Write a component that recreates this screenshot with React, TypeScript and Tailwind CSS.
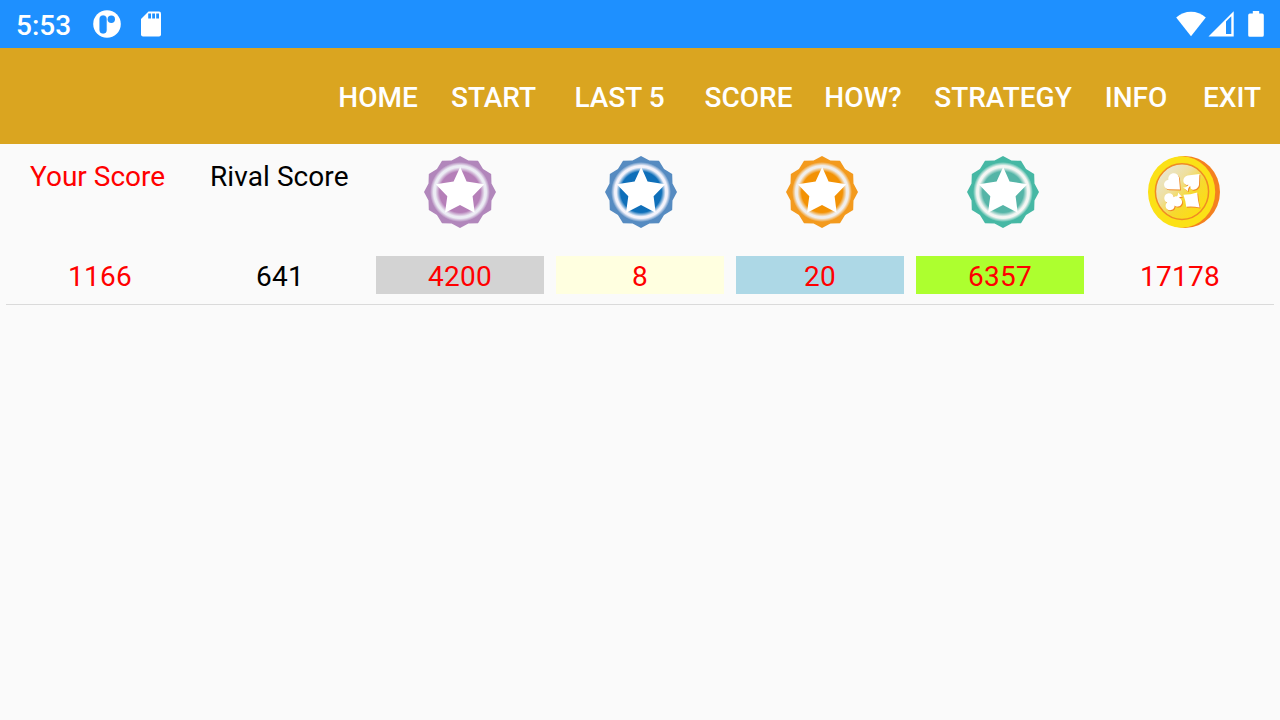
import { useId } from "react";

const MENU = [
  { label: "Home", width: "w-[118px]" },
  { label: "Start", width: "w-[113px]" },
  { label: "Last 5", width: "w-[139px]" },
  { label: "Score", width: "w-[119px]" },
  { label: "How?", width: "w-[110px]" },
  { label: "Strategy", width: "w-[170px]" },
  { label: "Info", width: "w-24" },
  { label: "Exit", width: "w-24" },
];

const BADGES = [
  { edge: "#b186bb", core: "#b57fb8", ring: "#ececf4" },
  { edge: "#568bc1", core: "#0f6fb9", ring: "#f4f3fb" },
  { edge: "#f39a1d", core: "#f39204", ring: "#f0eeec" },
  { edge: "#46b8a4", core: "#55b5a7", ring: "#f4f6f3" },
];

const VALUES = [
  { value: "1166", style: "text-[#ff0000]" },
  { value: "641", style: "text-black" },
  { value: "4200", style: "text-[#ff0000] bg-[#d3d3d3]" },
  { value: "8", style: "text-[#ff0000] bg-[#ffffe0]" },
  { value: "20", style: "text-[#ff0000] bg-[#add8e6]" },
  { value: "6357", style: "text-[#ff0000] bg-[#adff2f]" },
  { value: "17178", style: "text-[#ff0000]" },
];

// 24 vertices, alternating between the tips and the notches
const SEAL = Array.from({ length: 24 }, (_, i) => {
  const r = i % 2 ? 32.6 : 36;
  const a = (i * Math.PI) / 12;
  return `${(36 + r * Math.sin(a)).toFixed(2)},${(36 - r * Math.cos(a)).toFixed(2)}`;
}).join(" ");

function Badge({ edge, core, ring }: { edge: string; core: string; ring: string }) {
  const id = useId();
  return (
    <svg viewBox="0 0 72 72" className="size-[72px]">
      <defs>
        <radialGradient id={id} gradientUnits="userSpaceOnUse" cx="36" cy="36" r="30">
          <stop offset="0.68" stopColor={core} />
          <stop offset="0.82" stopColor={ring} />
          <stop offset="0.88" stopColor={ring} />
          <stop offset="1" stopColor={edge} />
        </radialGradient>
      </defs>
      <polygon points={SEAL} fill={edge} />
      <circle cx="36" cy="36" r="30" fill={`url(#${id})`} />
      <polygon
        points="36.2,11 42.6,25.6 60.3,28.2 48.6,40.2 50.7,56.7 36,49 21,56.7 23.3,40.2 11.8,28.2 29.6,25.6"
        fill="#fff"
      />
    </svg>
  );
}

function Suits() {
  return (
    <>
      <path d="M32 33.4 L20.5 33.2 C15 32.8 14.2 25 20.4 23.8 C19.4 17 29 14.6 31 21.5 Z" />
      <path d="M51.4 18 L39.6 19.6 C34.6 20.8 33.8 27.4 38.4 29 L40.6 28.8 C39.6 30.6 37.8 31.6 35 31.4 L40 35.2 C39.8 33 40.6 31.2 42.2 30 L42.6 32.2 C44.8 35.4 50.4 33.2 51 28.8 Z" />
      <path d="M30 36.4 L34.4 41 C32.8 40.6 31.8 41 31 41.8 C35.8 43.4 34.8 50.4 29.8 50.6 C28.4 50.8 27.4 50.2 26.6 49.6 C26.8 55.6 18 55.8 17.6 50.2 C17.6 48.6 18.2 47.4 19.2 46.6 C14.6 44.6 15.8 37.4 20.8 37.2 C23.8 37.2 25.6 39 25.8 41.2 C26.6 40.4 27.6 40.2 28.8 40.4 C29.8 39.4 30.2 38 30 36.4 Z" />
      <path d="M35.4 38.8 Q42.6 38.6 49.2 36.4 Q49.6 44.2 51.6 51.4 Q44.8 50.2 38.2 50.8 Q37.6 44.6 35.4 38.8 Z" />
    </>
  );
}

function Coin() {
  return (
    <svg viewBox="0 0 72 72" className="size-[72px]">
      <defs>
        <linearGradient id="coinFace" x1="0.12" y1="0.15" x2="0.85" y2="0.85">
          <stop offset="0" stopColor="#e9e6cf" />
          <stop offset="0.35" stopColor="#efdf9c" />
          <stop offset="0.65" stopColor="#f6d92f" />
          <stop offset="1" stopColor="#fcdd14" />
        </linearGradient>
      </defs>
      <ellipse cx="37" cy="36" rx="35" ry="36" fill="#f4801f" />
      <ellipse cx="33.6" cy="36" rx="33.6" ry="35.8" fill="#fbe116" />
      <ellipse cx="34" cy="35.6" rx="26.6" ry="27.8" fill="url(#coinFace)" stroke="#f08a24" strokeWidth="1.5" />
      <g fill="#f08a24" transform="translate(0.9 1)">
        <Suits />
      </g>
      <g fill="#fff">
        <Suits />
      </g>
    </svg>
  );
}

function StatusBar() {
  return (
    <div className="flex h-12 items-center justify-between bg-[#1e90ff] text-white">
      <div className="flex items-center pl-4">
        <span className="w-[77px] pt-1 text-[28px] leading-8 font-medium">5:53</span>
        <svg viewBox="0 0 28 28" className="size-7">
          <circle cx="14" cy="14" r="13.8" fill="#fff" />
          <rect x="6.6" y="5.4" width="7" height="18" rx="3.5" fill="#1e90ff" stroke="#1e90ff" strokeWidth="0.3" />
          <circle cx="18.3" cy="9.3" r="3.7" fill="#1e90ff" />
        </svg>
        <svg viewBox="0 0 20 26" className="ml-5 h-[26px] w-5">
          <path d="M7.5 0.5 H18 Q20 0.5 20 2.5 V23.5 Q20 25.5 18 25.5 H2 Q0 25.5 0 23.5 V8 Z" fill="#fff" />
          <path d="M7.2 2.5 h2.8 v5 h-2.8 z M11.2 2.5 h2.8 v5 h-2.8 z M15.2 2.5 h2.8 v5 h-2.8 z" fill="#1e90ff" />
        </svg>
      </div>
      <div className="flex items-center pr-4">
        <svg viewBox="0 0 30 26" className="h-[26px] w-[30px]">
          <path d="M15 25.2 L0.2 6.4 C8.5 -1.2 21.5 -1.2 29.8 6.4 Z" fill="#fff" />
        </svg>
        <svg viewBox="0 0 26 26" className="ml-[2px] size-[26px]">
          <path fillRule="evenodd" d="M0.5 25.5 L25.7 0.3 V25.5 Z M18 10.6 V23 H23.3 V5.3 Z" fill="#fff" />
        </svg>
        <svg viewBox="0 0 16 26" className="ml-[14px] h-[26px] w-4">
          <path d="M4.8 0 H11.2 V2.5 H14.2 Q15.8 2.5 15.8 4.2 V24.2 Q15.8 25.8 14.2 25.8 H1.8 Q0.2 25.8 0.2 24.2 V4.2 Q0.2 2.5 1.8 2.5 H4.8 Z" fill="#fff" />
        </svg>
      </div>
    </div>
  );
}

export default function App() {
  return (
    <div className="h-[720px] w-[1280px] overflow-hidden bg-[#fafafa] font-['Roboto',sans-serif]">
      <StatusBar />

      <nav className="flex h-24 items-center justify-end bg-[#daa520]">
        {MENU.map((item) => (
          <button
            key={item.label}
            className={`${item.width} pt-1 text-center text-[28px] leading-8 font-medium whitespace-nowrap text-white uppercase`}
          >
            {item.label}
          </button>
        ))}
      </nav>

      <div className="flex h-28 pt-3 text-[28px] leading-8">
        <div className="w-[180px] pt-[5px] pl-[30px] whitespace-nowrap text-[#ff0000]">Your Score</div>
        <div className="w-[189px] pt-[5px] pl-[30px] tracking-[0.08px] whitespace-nowrap text-black">Rival Score</div>
        {BADGES.map((badge) => (
          <div key={badge.edge} className="flex w-[181px] justify-center">
            <Badge {...badge} />
          </div>
        ))}
        <div className="flex w-[181px] justify-center">
          <Coin />
        </div>
      </div>

      <div className="mx-1.5 border-b border-[#dadada] px-2.5 pb-2.5">
        <div className="flex gap-3">
          {VALUES.map((cell) => (
            <div
              key={cell.value}
              className={`${cell.style} h-[38px] w-[168px] pt-[5px] text-center text-[28px] leading-8 tracking-[0.25px]`}
            >
              {cell.value}
            </div>
          ))}
        </div>
      </div>
    </div>
  );
}
